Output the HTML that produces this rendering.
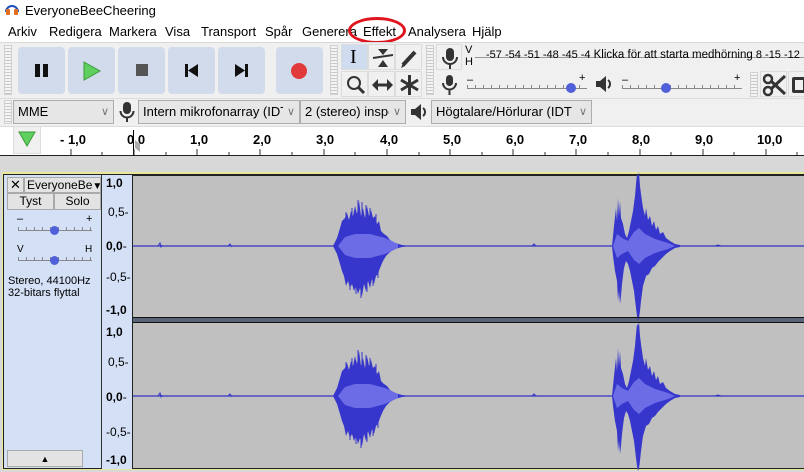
<!DOCTYPE html>
<html><head><meta charset="utf-8">
<style>
*{margin:0;padding:0;box-sizing:border-box}
body{width:804px;height:472px;overflow:hidden;background:#fff;font-family:"Liberation Sans",sans-serif;font-size:12px;color:#000;position:relative}
.a{position:absolute}
.btn{position:absolute;top:47px;width:47px;height:47px;background:#d2dbeb;border-radius:4px}
.grip{position:absolute;width:8px;background:repeating-linear-gradient(#f4f4f4 0 2px,#c8c8c8 2px 3px);border:1px solid #d0d0d0}
.tool{position:absolute;width:27px;height:26px;background:#f0f0f0;border:1px solid #dcdcdc}
.sel{position:absolute;height:24px;top:100px;background:#e6e6e6;border:1px solid #adadad;font-size:13px;line-height:22px;padding-left:4px;white-space:nowrap;overflow:hidden}
.sel .ch{position:absolute;right:0;top:0;width:16px;text-align:center;background:#e6e6e6;color:#777;font-size:11px}
.rl{position:absolute;top:132px;font-weight:bold;font-size:13px}
.vr{position:absolute;font-size:12px;left:106px}
.vr b{font-weight:bold}
.sl{position:absolute;height:4px;border-bottom:1px solid #888;background:repeating-linear-gradient(90deg,#888 0 1px,transparent 1px 8px)}
</style></head><body>
<div class="a" style="left:5px;top:3px;width:14px;height:12px">
<svg width="14" height="12"><path d="M1 9 A6 6 0 0 1 13 9" fill="none" stroke="#2050c0" stroke-width="2"/><rect x="1" y="6" width="4" height="6" rx="1" fill="#e07020"/><rect x="9" y="6" width="4" height="6" rx="1" fill="#e07020"/></svg></div>
<div class="a" style="left:25px;top:3px;font-size:13px">EveryoneBeeCheering</div>
<div class="a" style="top:24px;left:8px;font-size:13px">
<span class="a" style="left:0">Arkiv</span><span class="a" style="left:41px">Redigera</span><span class="a" style="left:101px">Markera</span><span class="a" style="left:157px">Visa</span><span class="a" style="left:193px">Transport</span><span class="a" style="left:257px">Spår</span><span class="a" style="left:294px">Generera</span><span class="a" style="left:355px">Effekt</span><span class="a" style="left:400px">Analysera</span><span class="a" style="left:464px">Hjälp</span></div>
<div class="a" style="left:348px;top:17px;width:58px;height:27px;border:3px solid #e0141e;border-radius:50%"></div>
<div class="a" style="left:0;top:42px;width:804px;height:84px;background:#f0f0f0;border-top:1px solid #d8d8d8"></div>
<div class="grip" style="left:4px;top:45px;height:50px"></div>
<div class="btn" style="left:18px"><div class="a" style="left:17px;top:17px;width:5px;height:13px;background:#111"></div><div class="a" style="left:25px;top:17px;width:5px;height:13px;background:#111"></div></div>
<div class="btn" style="left:68px"><svg class="a" style="left:15px;top:14px" width="18" height="20"><path d="M1 1 L17 10 L1 19 Z" fill="#5fd05f" stroke="#3a9a3a"/></svg></div>
<div class="btn" style="left:118px"><div class="a" style="left:18px;top:17px;width:12px;height:12px;background:#555"></div></div>
<div class="btn" style="left:168px"><div class="a" style="left:17px;top:17px;width:3px;height:13px;background:#111"></div><svg class="a" style="left:20px;top:17px" width="10" height="13"><path d="M10 0 L0 6.5 L10 13Z" fill="#111"/></svg></div>
<div class="btn" style="left:218px"><svg class="a" style="left:17px;top:17px" width="10" height="13"><path d="M0 0 L10 6.5 L0 13Z" fill="#111"/></svg><div class="a" style="left:27px;top:17px;width:3px;height:13px;background:#111"></div></div>
<div class="btn" style="left:276px"><div class="a" style="left:15px;top:16px;width:16px;height:16px;border-radius:50%;background:#e03a3a"></div></div>
<div class="grip" style="left:330px;top:45px;height:50px"></div>
<div class="tool" style="left:341px;top:44px;background:#cfdbef"><span class="a" style="left:8px;top:1px;font-size:20px;font-family:'Liberation Serif',serif">I</span></div>
<div class="tool" style="left:368px;top:44px"><svg width="27" height="26"><path d="M4 13 L24 10" stroke="#333" stroke-width="2"/><path d="M9 4 L19 4 L14 10Z M9 22 L19 22 L14 15Z" fill="#333"/></svg></div>
<div class="tool" style="left:395px;top:44px"><svg width="27" height="26"><path d="M7 20 L19 7" stroke="#333" stroke-width="4"/><path d="M5 23 L7 18 L9 21Z" fill="#333"/></svg></div>
<div class="tool" style="left:341px;top:71px"><svg width="27" height="26"><circle cx="12" cy="11" r="6" fill="none" stroke="#333" stroke-width="2"/><path d="M16 15 L22 21" stroke="#333" stroke-width="3"/></svg></div>
<div class="tool" style="left:368px;top:71px"><svg width="27" height="26"><path d="M8 13 L20 13" stroke="#333" stroke-width="3"/><path d="M3 13 L9 7 L9 19Z M24 13 L18 7 L18 19Z" fill="#333"/></svg></div>
<div class="tool" style="left:395px;top:71px"><svg width="27" height="26"><path d="M13.5 3 V23 M5 8 L22 18 M22 8 L5 18" stroke="#333" stroke-width="3"/></svg></div>
<div class="grip" style="left:426px;top:45px;height:50px"></div>
<div class="tool" style="left:436px;top:44px;width:26px"><svg width="26" height="26"><rect x="9" y="3" width="8" height="13" rx="4" fill="#333"/><path d="M6 12 A7 7 0 0 0 20 12 M13 19 V24" fill="none" stroke="#333" stroke-width="2"/></svg></div>
<div class="a" style="left:465px;top:44px;font-size:11px;line-height:12px">V<br>H</div>
<div class="a" style="left:475px;top:57px;width:329px;height:1px;background:#999"></div>
<div class="a" style="left:486px;top:49px;font-size:11px;white-space:nowrap">-57 -54 -51 -48 -45 -4 <span style="font-size:11.5px">Klicka för att starta medhörning</span> 8 -15 -12</div>
<div class="a" style="left:441px;top:73px"><svg width="18" height="24"><rect x="5" y="2" width="7" height="11" rx="3.5" fill="#333"/><path d="M2 10 A6.5 6.5 0 0 0 15 10 M8.5 17 V22" fill="none" stroke="#333" stroke-width="2"/></svg></div>
<div class="sl" style="left:467px;top:85px;width:120px"></div>
<div class="a" style="left:467px;top:74px;font-size:11px">–</div><div class="a" style="left:579px;top:72px;font-size:11px">+</div>
<div class="a" style="left:566px;top:83px;width:10px;height:10px;border-radius:50%;background:#5060d8"></div>
<div class="a" style="left:594px;top:74px"><svg width="20" height="20"><path d="M2 7 H6 L12 2 V18 L6 13 H2Z" fill="#333"/><path d="M14 6 A5 5 0 0 1 14 14" fill="none" stroke="#333" stroke-width="2"/></svg></div>
<div class="sl" style="left:622px;top:85px;width:120px"></div>
<div class="a" style="left:622px;top:74px;font-size:11px">–</div><div class="a" style="left:734px;top:72px;font-size:11px">+</div>
<div class="a" style="left:661px;top:83px;width:10px;height:10px;border-radius:50%;background:#5060d8"></div>
<div class="grip" style="left:750px;top:72px;height:25px"></div>
<div class="tool" style="left:760px;top:71px"><svg width="27" height="26"><circle cx="7" cy="7" r="4" fill="none" stroke="#333" stroke-width="2.5"/><circle cx="7" cy="19" r="4" fill="none" stroke="#333" stroke-width="2.5"/><path d="M10 9 L24 22 M10 17 L24 4" stroke="#333" stroke-width="3"/></svg></div>
<div class="tool" style="left:788px;top:71px;width:20px"><div class="a" style="left:3px;top:5px;width:14px;height:16px;border:3px solid #333;border-radius:2px"></div></div>
<div class="a" style="left:0;top:98px;width:804px;height:1px;background:#dcdcdc"></div>
<div class="grip" style="left:4px;top:100px;height:24px"></div>
<div class="sel" style="left:13px;width:101px">MME<span class="ch">∨</span></div>
<div class="a" style="left:119px;top:101px"><svg width="16" height="22"><rect x="4" y="1" width="8" height="12" rx="4" fill="#333"/><path d="M1.5 10 A6.5 6.5 0 0 0 14.5 10 M8 17 V21" fill="none" stroke="#333" stroke-width="2"/></svg></div>
<div class="sel" style="left:138px;width:162px">Intern mikrofonarray (IDT I<span class="ch">∨</span></div>
<div class="sel" style="left:300px;width:106px">2 (stereo) inspe<span class="ch">∨</span></div>
<div class="a" style="left:409px;top:102px"><svg width="20" height="20"><path d="M2 7 H6 L12 2 V18 L6 13 H2Z" fill="#333"/><path d="M14 6 A5 5 0 0 1 14 14" fill="none" stroke="#333" stroke-width="2"/></svg></div>
<div class="sel" style="left:431px;width:161px">Högtalare/Hörlurar (IDT H<span class="ch">∨</span></div>
<div class="a" style="left:0;top:126px;width:804px;height:30px;background:#fff;border-top:1px solid #dcdcdc"></div>
<div class="a" style="left:13px;top:126px;width:28px;height:28px;background:#f0f0f0;border:1px solid #ddd"><svg class="a" style="left:4px;top:4px" width="18" height="16"><path d="M1 1 H17 L9 15Z" fill="#5fd05f" stroke="#3a9a3a"/></svg></div>
<div class="a" style="left:0;top:155px;width:804px;height:1px;background:#222"></div>
<div class="a" style="left:133px;top:130px;width:1px;height:26px;background:#000"></div>
<div class="rl" style="left:60px">- 1,0</div><div class="rl" style="left:127px">0,0</div><div class="rl" style="left:190px">1,0</div><div class="rl" style="left:253px">2,0</div><div class="rl" style="left:316px">3,0</div><div class="rl" style="left:380px">4,0</div><div class="rl" style="left:443px">5,0</div><div class="rl" style="left:506px">6,0</div><div class="rl" style="left:569px">7,0</div><div class="rl" style="left:632px">8,0</div><div class="rl" style="left:695px">9,0</div><div class="rl" style="left:757px">10,0</div>
<svg class="a" style="left:0;top:140px" width="804" height="16"><g stroke="#333">
<path d="M71 9V15M102 12V15M134 9V15M166 12V15M197 9V15M229 12V15M260 9V15M292 12V15M324 9V15M355 12V15M387 9V15M419 12V15M450 9V15M482 12V15M513 9V15M545 12V15M576 9V15M608 12V15M640 9V15M671 12V15M703 9V15M734 12V15M766 9V15M797 12V15"/></g>
<path d="M135 0 L140 4 L140 12 L135 8Z" fill="#aaa"/></svg>
<div class="a" style="left:0;top:156px;width:804px;height:316px;background:#d8d8d8"></div>
<div class="a" style="left:2px;top:172px;width:802px;height:298px;border:2px solid #e8e89a;border-right:none"></div>
<div class="a" style="left:3px;top:174px;width:801px;height:295px;border:1px solid #222;border-right:none;background:#d4e0f6"></div>
<div class="a" style="left:5px;top:176px;width:96px;height:292px;background:#d4e0f6"></div>
<div class="a" style="left:7px;top:177px;width:17px;height:16px;background:#e3e3e3;border:1px solid #aaa;text-align:center;line-height:14px;font-size:13px">✕</div>
<div class="a" style="left:24px;top:177px;width:77px;height:16px;background:#e3e3e3;border:1px solid #aaa;font-size:12px;line-height:14px;padding-left:2px;white-space:nowrap;overflow:hidden">EveryoneBe<span style="font-size:10px">▼</span></div>
<div class="a" style="left:7px;top:193px;width:47px;height:17px;background:#e3e3e3;border:1px solid #aaa;text-align:center;line-height:15px">Tyst</div>
<div class="a" style="left:54px;top:193px;width:47px;height:17px;background:#e3e3e3;border:1px solid #aaa;text-align:center;line-height:15px">Solo</div>
<div class="a" style="left:17px;top:213px;font-size:11px">–</div><div class="a" style="left:86px;top:213px;font-size:11px">+</div>
<div class="sl" style="left:18px;top:227px;width:74px"></div>
<div class="a" style="left:50px;top:226px;width:9px;height:9px;border-radius:50%;background:#5060d8"></div>
<div class="a" style="left:17px;top:244px;font-size:10px">V</div><div class="a" style="left:85px;top:244px;font-size:10px">H</div>
<div class="sl" style="left:18px;top:257px;width:74px"></div>
<div class="a" style="left:50px;top:256px;width:9px;height:9px;border-radius:50%;background:#5060d8"></div>
<div class="a" style="left:8px;top:275px;font-size:11px;line-height:12px">Stereo, 44100Hz<br>32-bitars flyttal</div>
<div class="a" style="left:7px;top:450px;width:76px;height:17px;background:#e3e3e3;border:1px solid #aaa;text-align:center;font-size:9px;line-height:16px">▲</div>
<div class="a" style="left:101px;top:175px;width:1px;height:294px;background:#333"></div>
<div class="a" style="left:102px;top:175px;width:31px;height:294px;background:#d4e0f6"></div>
<div class="vr" style="top:176px"><b>1,0</b></div><div class="vr" style="top:205px;left:108px">0,5-</div><div class="vr" style="top:239px"><b>0,0</b>-</div><div class="vr" style="top:270px">-0,5-</div><div class="vr" style="top:303px"><b>-1,0</b></div>
<div class="vr" style="top:325px"><b>1,0</b></div><div class="vr" style="top:355px;left:108px">0,5-</div><div class="vr" style="top:390px"><b>0,0</b>-</div><div class="vr" style="top:425px">-0,5-</div><div class="vr" style="top:453px"><b>-1,0</b></div>
<div class="a" style="left:132px;top:175px;width:672px;height:294px;background:#222"></div>
<div class="a" style="left:133px;top:176px;width:671px;height:141px;background:#c0c0c0"></div>
<div class="a" style="left:133px;top:317px;width:671px;height:5px;background:#5a6478"></div>
<div class="a" style="left:133px;top:323px;width:671px;height:145px;background:#c0c0c0"></div>
<svg class="a" style="left:0;top:0" width="804" height="472">
<defs>
<g id="w">
<path d="M133 0H804" stroke="#3434c4" stroke-width="1.3"/>
<path d="M158 0l2-3 1 4 1-2M228 0l2-2 2 3M532 0l2-2 2 2M715 0l3-1 3 1" stroke="#3434c4" fill="none"/>
<path d="M333 0L337-8 340-18 342-25 345-28 347-33 349-26 351-35 353-30 355-40 357-32 359-45 361-30 363-38 365-28 367-40 369-30 371-36 373-28 375-30 377-22 379-25 381-15 384-12 387-10 390-6 395-3 402-1 410 0 402 1 395 3 390 6 386 10 383 15 380 22 378 28 376 30 374 38 372 33 370 42 368 35 366 45 364 38 362 50 360 42 358 48 356 40 354 45 352 38 350 42 348 35 346 40 344 30 342 25 340 18 337 8Z" fill="#3636cc"/>
<path d="M346-34V-20M352-38V-25M358-46V-30M362-44V-30M366-41V-28M370-38V-25M376-32V-20M350 30V44M356 32V48M361 34V52M367 32V46M373 26V40M378 20V32" stroke="#3636cc" stroke-width="1"/>
<path d="M338 0L345-9 355-12 370-12 385-8 398-2 398 2 385 8 370 12 355 12 345 9Z" fill="#6c6ce6"/>
<path d="M612 0L614-20 616-38 617-25 618-48 619-30 620-45 621-28 623-22 625-12 627-8 629-15 631-25 633-35 635-50 636-62 637-72 638-70 639-74 640-60 641-52 643-38 645-30 646-38 648-26 650-30 652-20 654-25 656-16 658-20 660-12 663-14 666-8 670-5 675-2 680-1 680 1 675 2 670 5 666 8 662 12 658 16 655 20 652 22 649 28 646 30 643 40 641 55 640 65 639 72 638 75 637 70 636 62 634 45 632 35 630 25 628 18 626 15 624 22 622 38 621 50 620 58 619 45 618 55 617 35 615 25 613 10Z" fill="#3636cc"/>
<path d="M613 0L617-12 622-8 628-5 634-14 639-18 645-12 655-7 668-3 675 0 668 3 655 7 645 12 639 18 634 14 628 5 622 8 617 12Z" fill="#6c6ce6"/>
</g></defs>
<use href="#w" transform="translate(0,246)"/>
<use href="#w" transform="translate(0,396)"/>
</svg>
<div class="a" style="left:133px;top:317px;width:671px;height:1px;background:#111"></div>
<div class="a" style="left:133px;top:322px;width:671px;height:1px;background:#111"></div>
</body></html>
